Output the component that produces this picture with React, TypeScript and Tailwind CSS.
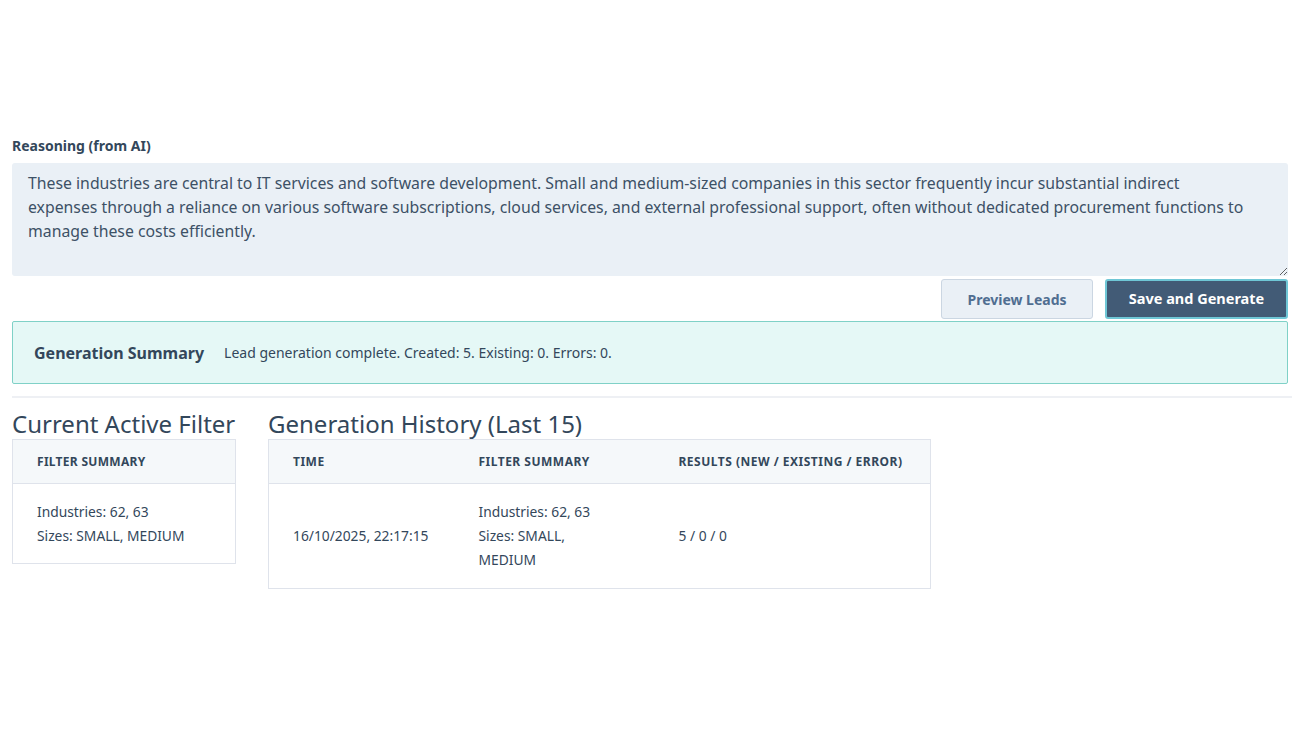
import { useState } from "react";

const font = { fontFamily: '"Noto Sans", "Liberation Sans", sans-serif' };

const reasoningText =
  "These industries are central to IT services and software development. Small and medium-sized companies in this sector frequently incur substantial indirect expenses through a reliance on various software subscriptions, cloud services, and external professional support, often without dedicated procurement functions to manage these costs efficiently.";

export default function App() {
  const [reasoning, setReasoning] = useState(reasoningText);

  return (
    <div className="min-h-screen bg-white text-[#33475b]" style={font}>
      <div className="pl-3 pr-[19px] pt-[138px]">
        <label className="block text-[14px] font-bold leading-4 text-[#33475b]">
          Reasoning (from AI)
        </label>
        <textarea
          value={reasoning}
          onChange={(e) => setReasoning(e.target.value)}
          className="mt-[9px] block h-[113px] w-full resize-y rounded-[3px] bg-[#eaf0f6] pl-4 pr-[43px] pt-[8px] text-[15.8px] leading-6 text-[#3d5166] outline-none"
        />

        <div className="mt-[3px] flex justify-end gap-3">
          <button className="h-[40px] w-[152px] rounded-[3px] border border-[#cbd6e2] bg-[#eaf0f6] text-[14px] font-bold text-[#506e91]">
            Preview Leads
          </button>
          <button className="h-[40px] w-[183px] rounded-[3px] border-2 border-[#6fc7d6] bg-[#425b76] text-[14.5px] font-bold text-white">
            Save and Generate
          </button>
        </div>

        <div className="mt-[2px] flex h-[63px] items-center gap-5 rounded-[2px] border border-[#7fd1c7] bg-[#e5f8f6] px-[21px]">
          <span className="text-[16px] font-bold">Generation Summary</span>
          <span className="text-[14px]">
            Lead generation complete. Created: 5. Existing: 0. Errors: 0.
          </span>
        </div>

        <div className="mt-3 mr-[-4px] h-[2px] bg-[#eef0f4]" />

        <div className="mt-[12px] flex items-start gap-8">
          <section>
            <h2 className="text-[24px] leading-7 text-[#33475b]">Current Active Filter</h2>
            <table className="mt-[1px] w-[224px] border-collapse border border-[#dfe3eb] text-left">
              <thead>
                <tr className="h-[44px] bg-[#f5f8fa]">
                  <th className="border-b border-[#dfe3eb] px-6 text-[12px] font-bold tracking-[0.3px]">
                    FILTER SUMMARY
                  </th>
                </tr>
              </thead>
              <tbody>
                <tr className="h-[80px]">
                  <td className="px-6 text-[13.8px] leading-6">
                    Industries: 62, 63
                    <br />
                    Sizes: SMALL, MEDIUM
                  </td>
                </tr>
              </tbody>
            </table>
          </section>

          <section>
            <h2 className="text-[24px] leading-7 text-[#33475b]">Generation History (Last 15)</h2>
            <table className="mt-[1px] w-[663px] border-collapse border border-[#dfe3eb] text-left">
              <thead>
                <tr className="h-[44px] bg-[#f5f8fa] text-[12px] font-bold tracking-[0.5px]">
                  <th className="w-[186px] border-b border-[#dfe3eb] px-6">TIME</th>
                  <th className="w-[200px] border-b border-[#dfe3eb] px-6">FILTER SUMMARY</th>
                  <th className="border-b border-[#dfe3eb] px-6">RESULTS (NEW / EXISTING / ERROR)</th>
                </tr>
              </thead>
              <tbody>
                <tr className="h-[105px] text-[13.8px] leading-6">
                  <td className="px-6">16/10/2025, 22:17:15</td>
                  <td className="px-6">
                    Industries: 62, 63
                    <br />
                    Sizes: SMALL,
                    <br />
                    MEDIUM
                  </td>
                  <td className="px-6">5 / 0 / 0</td>
                </tr>
              </tbody>
            </table>
          </section>
        </div>
      </div>
    </div>
  );
}
